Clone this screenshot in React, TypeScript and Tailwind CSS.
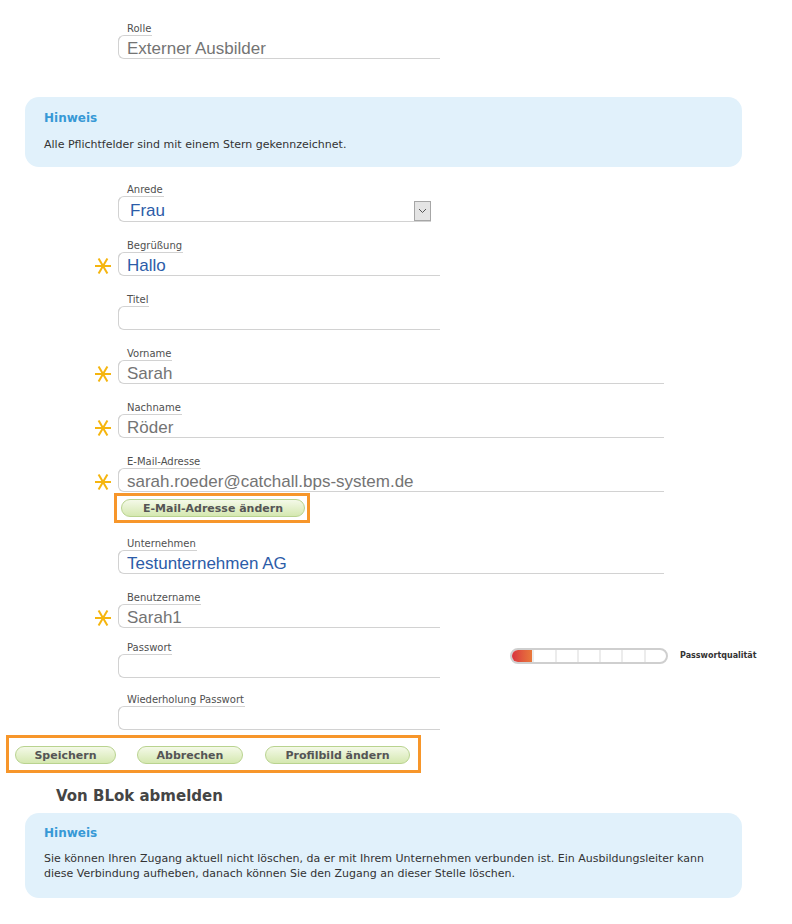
import React from "react";

const SMALL = { fontFamily: '"DejaVu Sans", Verdana, sans-serif' };
const VALUE = { fontFamily: '"Liberation Sans", Arial, sans-serif' };

function Star() {
  return (
    <svg width="18" height="18" viewBox="0 0 18 18">
      <g stroke="#f5b50f" strokeWidth="2">
        <line x1="1" y1="9" x2="17" y2="9" />
        <line x1="4.6" y1="1.4" x2="13.4" y2="16.6" />
        <line x1="13.4" y1="1.4" x2="4.6" y2="16.6" />
      </g>
    </svg>
  );
}

function Label({ text }: { text: string }) {
  return (
    <div
      className="relative block w-fit pl-[9px] pr-[1px] text-[10px] leading-[13px] text-[#505050]"
      style={SMALL}
    >
      {text}
      <span className="pointer-events-none absolute left-0 right-0 top-full h-[8px] rounded-tl-[6px] border-l border-t border-[#d2d2d2]" />
    </div>
  );
}

function Field({
  label,
  value,
  blue,
  wide,
  required,
  select,
  className,
  children,
}: {
  label: string;
  value?: string;
  blue?: boolean;
  wide?: boolean;
  required?: boolean;
  select?: boolean;
  className?: string;
  children?: React.ReactNode;
}) {
  return (
    <div className={"flex pl-[94px] " + (className ?? "")}>
      <div className="flex w-[24px] items-end pb-[1px]">{required && <Star />}</div>
      <div className={select ? "w-[313px]" : wide ? "w-[546px]" : "w-[322px]"}>
        <Label text={label} />
        <div
          className={
            "flex items-center rounded-l-[6px] border-b border-l border-t border-[#d2d2d2] border-t-transparent " +
            (select ? "h-[26px] pl-[11px] pr-0" : "h-[24px] pl-[8px]")
          }
        >
          <span
            className={"mt-[4px] flex-1 text-[17px] leading-[20px] " + (blue ? "text-[#2c5ca8]" : "text-[#747474]")}
            style={VALUE}
          >
            {value}
          </span>
          {select && (
            <span className="mt-[4px] flex h-[20px] w-[17px] items-center justify-center border border-[#a6a6a6] bg-[#e4e4e4]">
              <svg width="9" height="6" viewBox="0 0 9 6">
                <path d="M1 1 L4.5 4.5 L8 1" fill="none" stroke="#555" strokeWidth="1" />
              </svg>
            </span>
          )}
        </div>
      </div>
      {children}
    </div>
  );
}

function Btn({ text, w }: { text: string; w: string }) {
  return (
    <button
      className={
        "flex h-[18px] items-center justify-center rounded-full border border-[#b9d38f] bg-linear-to-b from-[#f4f9e8] to-[#d5e8b0] text-[11px] font-bold leading-none text-[#555] " +
        w
      }
      style={SMALL}
    >
      {text}
    </button>
  );
}

function Hinweis({ children, className }: { children: React.ReactNode; className?: string }) {
  return (
    <div
      className={"ml-[25px] w-[717px] rounded-[14px] bg-[#e1f1fb] pl-[19px] pr-[8px] " + (className ?? "")}
      style={SMALL}
    >
      <div className="text-[12px] font-bold leading-[16px] text-[#3799d6]">Hinweis</div>
      {children}
    </div>
  );
}

export default function App() {
  return (
    <div className="relative h-[924px] w-[792px] overflow-hidden bg-white pt-[22px]">
      <Field label="Rolle" value="Externer Ausbilder" />

      <Hinweis className="mt-[38px] h-[70px] pt-[13px]">
        <div className="mt-[11px] text-[11px] leading-[15px] text-[#333]">
          Alle Pflichtfelder sind mit einem Stern gekennzeichnet.
        </div>
      </Hinweis>

      <Field className="mt-[16px]" label="Anrede" value="Frau" blue select />
      <Field className="mt-[17px]" label="Begrüßung" value="Hallo" blue required />
      <Field className="mt-[17px]" label="Titel" value="" />
      <Field className="mt-[17px]" label="Vorname" value="Sarah" wide required />
      <Field className="mt-[17px]" label="Nachname" value="Röder" wide required />
      <Field className="mt-[17px]" label="E-Mail-Adresse" value="sarah.roeder@catchall.bps-system.de" wide required />

      <div className="mt-[1px] ml-[114px] h-[30px] w-[196px] border-[3px] border-[#f7962a] pl-[4px] pt-[3px]">
        <Btn text="E-Mail-Adresse ändern" w="w-[184px]" />
      </div>

      <Field className="mt-[14px]" label="Unternehmen" value="Testunternehmen AG" blue wide />
      <Field className="mt-[17px]" label="Benutzername" value="Sarah1" required />
      <Field className="mt-[13px]" label="Passwort" value="">
        <div className="ml-[70px] mt-[7px] flex h-[16px] items-center">
          <div className="flex h-[16px] w-[158px] overflow-hidden rounded-full border-2 border-[#cfcfcf] bg-white">
            {[0, 1, 2, 3, 4, 5, 6].map((i) => (
              <div
                key={i}
                className={
                  "h-full flex-1 " +
                  (i === 0 ? "bg-linear-to-r from-[#d8323f] to-[#e8783a]" : "border-l-2 border-[#ececec]")
                }
              />
            ))}
          </div>
          <span className="ml-[12px] text-[8px] font-bold text-[#333]" style={SMALL}>
            Passwortqualität
          </span>
        </div>
      </Field>
      <Field className="mt-[15px]" label="Wiederholung Passwort" value="" />

      <div className="mt-[5px] ml-[6px] flex h-[38px] w-[415px] items-start border-[3px] border-[#f7962a] pl-[6px] pt-[8px]">
        <Btn text="Speichern" w="w-[101px]" />
        <div className="ml-[21px]">
          <Btn text="Abbrechen" w="w-[106px]" />
        </div>
        <div className="ml-[22px]">
          <Btn text="Profilbild ändern" w="w-[145px]" />
        </div>
      </div>

      <div className="mt-[14px] ml-[56px] text-[15px] font-bold leading-[18px] text-[#454545]" style={SMALL}>
        Von BLok abmelden
      </div>

      <Hinweis className="mt-[8px] h-[85px] pt-[12px]">
        <div className="mt-[10px] text-[11px] leading-[15px] text-[#333]">
          Sie können Ihren Zugang aktuell nicht löschen, da er mit Ihrem Unternehmen verbunden ist. Ein
          Ausbildungsleiter kann diese Verbindung aufheben, danach können Sie den Zugang an dieser Stelle
          löschen.
        </div>
      </Hinweis>
    </div>
  );
}
